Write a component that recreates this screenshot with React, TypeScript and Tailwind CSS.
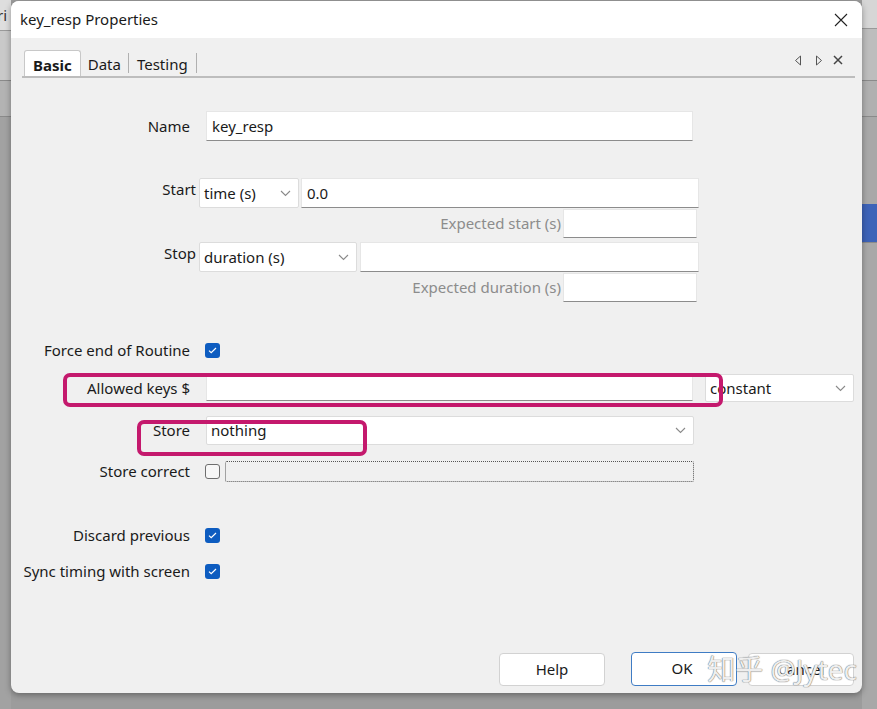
import React from "react";

const FONT = { fontFamily: '"Noto Sans", "Noto Sans CJK SC", sans-serif' };

const Chevron = () => (
  <svg width="11" height="7" viewBox="0 0 11 7" className="shrink-0">
    <path d="M1 1l4.5 4.5L10 1" fill="none" stroke="#8a8a8a" strokeWidth="1.1" />
  </svg>
);

const Check = ({ checked }: { checked: boolean }) =>
  checked ? (
    <div className="w-[15px] h-[15px] rounded-[3px] bg-[#0d5cc0] flex items-center justify-center">
      <svg width="9" height="7" viewBox="0 0 9 7">
        <path d="M1 3.6l2.2 2.1L8 1" fill="none" stroke="#ffffff" strokeWidth="1.2" />
      </svg>
    </div>
  ) : (
    <div className="w-[15px] h-[15px] rounded-[3px] border border-[#6e6e6e] bg-[#f7f7f7]" />
  );

const TextBox = ({ value, className }: { value?: string; className?: string }) => (
  <div
    className={
      "bg-white border border-[#e6e6e6] border-b-[#8c8c8c] flex items-center px-[5px] text-[15px] text-[#1a1a1a] " +
      (className ?? "")
    }
  >
    {value}
  </div>
);

const Select = ({ value, className }: { value: string; className?: string }) => (
  <div
    className={
      "bg-white border border-[#dcdcdc] rounded-[2px] flex items-center justify-between pl-[4px] pr-[7px] text-[15px] text-[#1a1a1a] " +
      (className ?? "")
    }
  >
    <span>{value}</span>
    <Chevron />
  </div>
);

const Label = ({ children, w = "w-[179px]" }: { children: React.ReactNode; w?: string }) => (
  <div className={w + " shrink-0 text-right text-[15px] text-[#1a1a1a]"}>{children}</div>
);

export default function App() {
  return (
    <div className="w-[877px] h-[709px] bg-[#9c9c9c] flex overflow-hidden" style={FONT}>
      {/* left strip of the app behind */}
      <div className="w-[11px] shrink-0 flex flex-col">
        <div className="h-[30px] bg-[#dedede] text-[15px] text-[#333] leading-[30px] overflow-hidden whitespace-nowrap -ml-[3px]">
          ri
        </div>
        <div className="h-[50px] bg-[#c9c9c9] border-t border-[#9a9a9a]" />
        <div className="h-[36px] bg-[#b3b3b3] border-t border-[#8a8a8a]" />
        <div className="flex-1 bg-[#a2a2a2] border-t border-[#8a8a8a]" />
      </div>

      {/* dialog */}
      <div className="w-[851px] h-[692px] mt-[1px] shrink-0 rounded-[8px] bg-[#f0f0f0] flex flex-col overflow-hidden relative shadow-[0_2px_6px_rgba(0,0,0,0.35)]">
        {/* title bar */}
        <div className="h-[37px] bg-white flex items-center justify-between pl-[9px] pr-[14px]">
          <span className="text-[15px] text-[#1a1a1a]">key_resp Properties</span>
          <svg width="14" height="14" viewBox="0 0 14 14">
            <path d="M1 1l12 12M13 1L1 13" stroke="#222" strokeWidth="1.1" />
          </svg>
        </div>

        {/* tab bar */}
        <div className="h-[40px] flex items-end pl-[11px] pr-[7px]">
          <div className="flex-1 flex items-end justify-between border-b-2 border-[#bdbdbd] h-[28px]">
            <div className="flex items-end h-full text-[15px] text-[#1a1a1a]">
              <div className="h-[26px] px-[8px] bg-white border border-b-0 border-[#c8c8c8] rounded-t-[3px] font-bold flex items-center pt-[3px] ml-[2px]">
                Basic
              </div>
              <div className="h-full flex items-center pt-[3px] px-[7px]">Data</div>
              <div className="w-px h-[20px] bg-[#b0b0b0] mb-[3px]" />
              <div className="h-full flex items-center pt-[3px] px-[8px]">Testing</div>
              <div className="w-px h-[20px] bg-[#b0b0b0] mb-[3px]" />
            </div>
            <div className="flex items-center gap-[13px] h-full pb-[6px] pr-[12px]">
              <svg width="8" height="11" viewBox="0 0 8 11">
                <path d="M6.5 1L1.5 5.5l5 4.5z" fill="none" stroke="#555" strokeWidth="1" />
              </svg>
              <svg width="8" height="11" viewBox="0 0 8 11">
                <path d="M1.5 1l5 4.5-5 4.5z" fill="none" stroke="#555" strokeWidth="1" />
              </svg>
              <svg width="10" height="10" viewBox="0 0 10 10" className="-ml-[3px]">
                <path d="M1 1l8 8M9 1L1 9" stroke="#444" strokeWidth="1.5" />
              </svg>
            </div>
          </div>
        </div>

        {/* form */}
        <div className="flex flex-col">
          <div className="mt-[33px] h-[30px] flex items-center">
            <Label>Name</Label>
            <TextBox value="key_resp" className="ml-[16px] w-[487px] h-[30px]" />
          </div>

          <div className="mt-[37px] h-[30px] flex items-start">
            <Label w="w-[185px]">Start</Label>
            <Select value="time (s)" className="ml-[3px] w-[100px] h-[30px] mt-0" />
            <TextBox value="0.0" className="ml-[2px] w-[398px] h-[30px]" />
          </div>
          <div className="mt-[1px] h-[29px] flex items-center">
            <div className="w-[552px] text-right text-[15px] text-[#8c8c8c] pr-[2px]">Expected start (s)</div>
            <TextBox className="w-[134px] h-[29px]" />
          </div>

          <div className="mt-[4px] h-[30px] flex items-start">
            <Label w="w-[185px]">Stop</Label>
            <Select value="duration (s)" className="ml-[3px] w-[158px] h-[30px]" />
            <TextBox className="ml-[3px] w-[339px] h-[30px]" />
          </div>
          <div className="mt-[1px] h-[29px] flex items-center">
            <div className="w-[552px] text-right text-[15px] text-[#8c8c8c] pr-[2px]">Expected duration (s)</div>
            <TextBox className="w-[134px] h-[29px]" />
          </div>

          <div className="mt-[38px] h-[20px] flex items-center">
            <Label>Force end of Routine</Label>
            <div className="ml-[15px]">
              <Check checked />
            </div>
          </div>

          <div className="mt-[14px] h-[28px] flex items-center relative">
            <Label>Allowed keys $</Label>
            <TextBox className="ml-[16px] w-[487px] h-[25px]" />
            <Select value="constant" className="ml-[12px] w-[149px] h-[28px]" />
            <div className="absolute left-[52px] top-[-1px] w-[660px] h-[34px] border-[4px] border-[#c4196d] rounded-[7px]" />
          </div>

          <div className="mt-[14px] h-[29px] flex items-center relative">
            <Label>Store</Label>
            <Select value="nothing" className="ml-[16px] w-[488px] h-[29px] pl-[4px]" />
            <div className="absolute left-[126px] top-[4px] w-[230px] h-[36px] border-[4px] border-[#c4196d] rounded-[7px]" />
          </div>

          <div className="mt-[16px] h-[21px] flex items-center">
            <Label>Store correct</Label>
            <div className="ml-[15px]">
              <Check checked={false} />
            </div>
            <div className="ml-[5px] w-[469px] h-[21px] border border-dotted border-[#555] rounded-[2px] bg-[#f0f0f0]" />
          </div>

          <div className="mt-[43px] h-[20px] flex items-center">
            <Label>Discard previous</Label>
            <div className="ml-[15px]">
              <Check checked />
            </div>
          </div>

          <div className="mt-[16px] h-[20px] flex items-center">
            <Label>Sync timing with screen</Label>
            <div className="ml-[15px]">
              <Check checked />
            </div>
          </div>

          <div className="mt-[71px] h-[34px] flex items-center justify-end pr-[8px] relative">
            <div className="w-[106px] h-[33px] bg-white border border-[#d2d2d2] rounded-[4px] flex items-center justify-center text-[15px] text-[#1a1a1a]">
              Help
            </div>
            <div className="ml-[26px] w-[106px] h-[34px] bg-white border-[1.5px] border-[#3f7cc4] rounded-[4px] flex items-center justify-center text-[15px] text-[#1a1a1a]">
              <span className="relative -left-[2px] -top-[1px]">OK</span>
            </div>
            <div className="ml-[11px] w-[106px] h-[33px] bg-white border border-[#d2d2d2] rounded-[4px] flex items-center justify-center text-[15px] text-[#1a1a1a]">
              Cancel
            </div>
            <div className="absolute right-[5px] top-[1px] text-[28px] leading-[32px] text-[#eeeeee] [text-shadow:0_0_1px_#6f6f6f,0_0_1px_#6f6f6f] whitespace-nowrap">
              知乎 @Jytec
            </div>
          </div>
        </div>
      </div>

      {/* right strip of the app behind */}
      <div className="w-[15px] shrink-0 flex flex-col">
        <div className="h-[28px] bg-[#d6d6d6]" />
        <div className="h-[52px] bg-[#bdbdbd] border-t border-[#999]" />
        <div className="h-[36px] bg-[#b0b0b0] border-t border-[#8a8a8a]" />
        <div className="h-[88px] bg-[#a8a8a8] border-t border-[#8a8a8a]" />
        <div className="h-[38px] bg-[#3d63b8]" />
        <div className="flex-1 bg-[#a8a8a8] border-t border-[#8a8a8a]" />
      </div>
    </div>
  );
}
